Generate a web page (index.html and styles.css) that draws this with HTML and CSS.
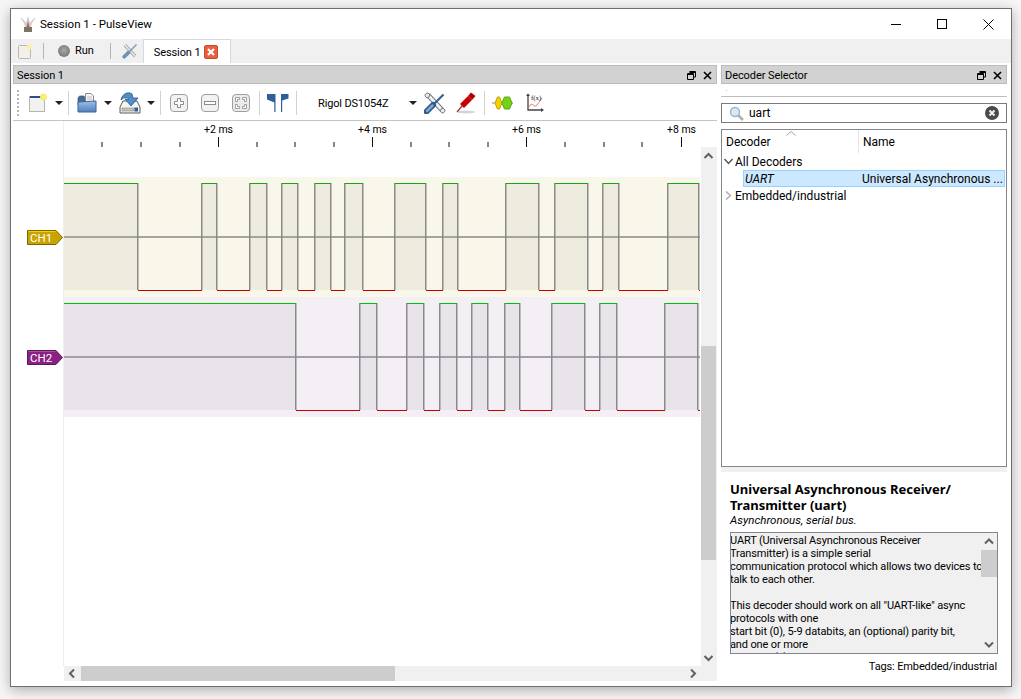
FILE: index.html
```html
<!DOCTYPE html>
<html lang="en">
<head>
  <meta charset="UTF-8" />
  <title>Session 1 - PulseView</title>
  <link rel="stylesheet" href="styles.css">
</head>
<body>
  <div class="window">

    <div class="titlebar">
      <svg class="app-icon" width="16" height="18" viewBox="0 0 16 18">
        <rect x="4" y="12" width="8" height="5" fill="#7d7466"/>
        <path d="M5 12 L3 4 L6 8 L8 1 L10 8 L13 4 L11 12Z" fill="#d5cbd8"/>
        <path d="M6.500 12 L8 6 L9.500 12Z" fill="#b0703c"/>
        <path d="M1 3 L4 7 M15 3 L12 7" stroke="#c4bcb2" fill="none"/>
      </svg>
      <span class="app-title">Session 1 - PulseView</span>
      <div class="win-buttons">
        <button class="win-btn"><svg width="10" height="10"><path d="M0 5.500H10" stroke="#000"/></svg></button>
        <button class="win-btn"><svg width="10" height="10"><rect x=".5" y=".5" width="9" height="9" fill="none" stroke="#000"/></svg></button>
        <button class="win-btn"><svg width="11" height="11"><path d="M.5 .5L10.500 10.500M10.500 .5L.5 10.500" stroke="#000"/></svg></button>
      </div>
    </div>

    <div class="mainbar">
      <svg class="m-new" width="14" height="15" viewBox="0 0 14 15">
        <rect x=".5" y="1.500" width="12" height="13" rx="1" fill="#f1f1ea" stroke="#b8b8b4"/>
        <circle cx="11" cy="3" r="2.500" fill="#fbf3a0"/>
      </svg>
      <span class="m-sep m-sep-a"></span>
      <span class="run-dot"></span>
      <span class="run-label">Run</span>
      <span class="m-sep m-sep-b"></span>
      <svg class="m-tools" width="16" height="16" viewBox="0 0 22 22">
        <path d="M4 3L18 18" stroke="#9c9c9c" stroke-width="4.500"/>
        <path d="M4 3L18 18" stroke="#e6e6e6" stroke-width="2.400"/>
        <path d="M3 19L9 13" stroke="#6f90b8" stroke-width="5" stroke-linecap="round"/>
        <path d="M9 13L20 2" stroke="#7f9cc0" stroke-width="2"/>
      </svg>
      <div class="tab">
        <span>Session 1</span>
        <svg class="tab-close" width="14" height="14" viewBox="0 0 14 14">
          <rect x=".5" y=".5" width="13" height="13" rx="1.500" fill="#e8603c" stroke="#c94a30"/>
          <path d="M4 4L10 10M10 4L4 10" stroke="#fff" stroke-width="2.200"/>
        </svg>
      </div>
    </div>

    <div class="main">

      <section class="dock dock-left">
        <div class="dock-title">
          <span>Session 1</span>
          <svg class="dock-float" width="9" height="9" viewBox="0 0 9 9"><path d="M2.500 .5H8.500V6H6.500M.5 2.500H6.500V8.500H.5ZM.5 3.500H6.500M2.500 1.500H8.500" fill="none" stroke="#000"/></svg>
          <svg class="dock-close" width="9" height="9" viewBox="0 0 9 9"><path d="M1 1L8 8M8 1L1 8" stroke="#000" stroke-width="1.600"/></svg>
        </div>

        <div class="toolbar">
          <span class="handle"></span>
          <svg class="t-new" width="18" height="20" viewBox="0 0 18 20">
            <rect x=".5" y="3.500" width="15" height="15" fill="#f2f2ee" stroke="#b4b4b4"/>
            <rect x="1" y="3" width="13" height="2" fill="#2b4f8c"/>
            <circle cx="14.500" cy="4" r="3" fill="#fdf45c" stroke="#f2e47a"/>
          </svg>
          <span class="caret c-new"></span>
          <span class="sep s-1"></span>
          <svg class="t-open" width="20" height="21" viewBox="0 0 20 21">
            <defs>
              <linearGradient id="folderFront" x1="0" y1="0" x2="0" y2="1">
                <stop offset="0" stop-color="#9cc0ea"/>
                <stop offset="1" stop-color="#4f80bc"/>
              </linearGradient>
            </defs>
            <path d="M1 5L2.500 3H7L8 5V12H1Z" fill="#4a6a96" stroke="#37547c" stroke-width=".7"/>
            <path d="M8.500 .5H14L16.500 3V10H8.500Z" fill="#f6f6f6" stroke="#8a8a8a"/>
            <path d="M10 4H15M10 6H15" stroke="#c0c0c0"/>
            <path d="M1 9L19 8V19H1Z" fill="url(#folderFront)" stroke="#3f6596"/>
          </svg>
          <span class="caret c-open"></span>
          <svg class="t-save" width="22" height="22" viewBox="0 0 22 22">
            <path d="M4 9H18L21 15V21H1V15Z" fill="#f4f4f0" stroke="#5a5a5a"/>
            <rect x="3" y="16" width="12" height="3" fill="#c4c4be" stroke="#777" stroke-width=".5"/>
            <rect x="15.500" y="15.500" width="3.500" height="4" fill="#345f96"/>
            <path d="M2 8C3 2 9 -1 13 2L14 6H19L12 14L6 7H10C9 5 5 5 2 8Z" fill="#4f8fc8" stroke="#28578a" stroke-width=".8"/>
          </svg>
          <span class="caret c-save"></span>
          <span class="sep s-2"></span>
          <svg class="t-zoomin" width="18" height="18" viewBox="0 0 18 18">
            <rect x=".5" y=".5" width="17" height="17" rx="3.500" fill="#f2f2f2" stroke="#9e9e9e"/>
            <path d="M7.500 4.500H10.500V7.500H13.500V10.500H10.500V13.500H7.500V10.500H4.500V7.500H7.500Z" fill="#fff" stroke="#8c8c8c"/>
          </svg>
          <svg class="t-zoomout" width="18" height="18" viewBox="0 0 18 18">
            <rect x=".5" y=".5" width="17" height="17" rx="3.500" fill="#f2f2f2" stroke="#9e9e9e"/>
            <rect x="3.500" y="7.500" width="11" height="3" fill="#fff" stroke="#8c8c8c"/>
          </svg>
          <svg class="t-fit" width="18" height="18" viewBox="0 0 18 18">
            <rect x=".5" y=".5" width="17" height="17" rx="3.500" fill="#ececec" stroke="#9e9e9e"/>
            <path d="M3.500 7.500V3.500H7.500V5.500H5.500V7.500ZM14.500 7.500V3.500H10.500V5.500H12.500V7.500ZM3.500 10.500V14.500H7.500V12.500H5.500V10.500ZM14.500 10.500V14.500H10.500V12.500H12.500V10.500Z" fill="#fff" stroke="#8c8c8c" stroke-width=".8"/>
          </svg>
          <span class="sep s-3"></span>
          <svg class="t-cursors" width="23" height="20" viewBox="0 0 23 20">
            <path d="M1 1H9.500V19H8.300V9.500L1 6.500Z" fill="#2f5f9e"/>
            <path d="M22.500 1H15V19H16.200V7.500L22.500 5.500Z" fill="#2f5f9e"/>
          </svg>
          <span class="sep s-4"></span>
          <span class="device">Rigol DS1054Z</span>
          <span class="caret"></span>
          <svg class="t-tools" width="22" height="22" viewBox="0 0 22 22">
            <path d="M4 3L18 18" stroke="#707a85" stroke-width="5"/>
            <path d="M4 3L18 18" stroke="#f2f2f2" stroke-width="3"/>
            <path d="M1 4L3 6L5 5L6 3L4 1C2 1 1 2 1 4Z" fill="#e8e8e8" stroke="#707a85"/>
            <path d="M21 18L19 16L17 17L16 19L18 21C20 21 21 20 21 18Z" fill="#e8e8e8" stroke="#707a85"/>
            <path d="M10 12L19.500 2.500" stroke="#35618f" stroke-width="2.200"/>
            <path d="M2.500 19.500L9 13" stroke="#2d5a8e" stroke-width="6" stroke-linecap="round"/>
            <path d="M3 19L8.500 13.500" stroke="#7fa7d4" stroke-width="2.500" stroke-linecap="round"/>
          </svg>
          <svg class="t-probe" width="20" height="22" viewBox="0 0 20 22">
            <ellipse cx="10" cy="20" rx="9" ry="1.500" fill="#d4d4d4"/>
            <path d="M1 20L7 13" stroke="#a83030" stroke-width="1.200"/>
            <path d="M4 12L12 4L16 8L8 16Z" fill="#cc0000"/>
            <path d="M12 4L15 0.500L19.500 4L16 8Z" fill="#b00000"/>
          </svg>
          <span class="sep s-5"></span>
          <svg class="t-decoder" width="21" height="14" viewBox="0 0 21 14">
            <path d="M0 7H3M19 7H21" stroke="#888a85"/>
            <path d="M3 7L5.500 1H7.500L10 7L7.500 13H5.500Z" fill="#edd400" stroke="#c4a000"/>
            <path d="M10 7L12.500 1H17.500L20 7L17.500 13H12.500Z" fill="#73d216" stroke="#5ba80e"/>
          </svg>
          <svg class="t-math" width="18" height="20" viewBox="0 0 18 20">
            <path d="M2 1V17H17" fill="none" stroke="#444" stroke-width="1.300"/>
            <path d="M0 3L2 0.500L4 3ZM15 15L18 17L15 19Z" fill="#444"/>
            <path d="M3 14C6 7 8 16 11 12S14 7 16 5" fill="none" stroke="#ee7878"/>
            <text class="math-f" x="5" y="7">f(x)</text>
          </svg>
        </div>

        <div class="trace">
          <svg class="plot" width="688" height="545" viewBox="13 121 688 545">
            <path d="M63.500 121V666" stroke="#efefef"/>

            <path d="M102 142V147M141 142V147M180 142V147M257 142V147M295 142V147M334 142V147M411 142V147M449 142V147M488 142V147M565 142V147M604 142V147M642 142V147" stroke="#111"/>
            <path d="M218.500 137V147M372.500 137V147M526.500 137V147M681.500 137V147" stroke="#111"/>
            <text class="tick" x="218.500" y="133">+2 ms</text>
            <text class="tick" x="372.500" y="133">+4 ms</text>
            <text class="tick" x="526.500" y="133">+6 ms</text>
            <text class="tick" x="681.500" y="133">+8 ms</text>

            <!-- CH1 -->
            <rect x="64" y="177" width="636" height="120" fill="#f9f7ea"/>
            <path fill="#edecdf" d="M64 183H138V290H64ZM202 183H217V290H202ZM250 183H267V290H250ZM282 183H298V290H282ZM315 183H331V290H315ZM345 183H363V290H345ZM395 183H426V290H395ZM443 183H458V290H443ZM506 183H539V290H506ZM555 183H588V290H555ZM603 183H619V290H603ZM668 183H699V290H668Z"/>
            <path class="mid" stroke="#a5a59b" d="M64 237H700"/>
            <path class="edge" d="M138 183V290M202 183V290M217 183V290M250 183V290M267 183V290M282 183V290M298 183V290M315 183V290M331 183V290M345 183V290M363 183V290M395 183V290M426 183V290M443 183V290M458 183V290M506 183V290M539 183V290M555 183V290M588 183V290M603 183V290M619 183V290M668 183V290M699 183V290"/>
            <path class="hi" d="M64 183.500H138M202 183.500H217M250 183.500H267M282 183.500H298M315 183.500H331M345 183.500H363M395 183.500H426M443 183.500H458M506 183.500H539M555 183.500H588M603 183.500H619M668 183.500H699"/>
            <path class="lo" d="M138 290.500H202M217 290.500H250M267 290.500H282M298 290.500H315M331 290.500H345M363 290.500H395M426 290.500H443M458 290.500H506M539 290.500H555M588 290.500H603M619 290.500H668M699 290.500H700"/>

            <!-- CH2 -->
            <rect x="64" y="297" width="636" height="120" fill="#f4eff5"/>
            <path fill="#e9e4ea" d="M64 303H296V410H64ZM360 303H377V410H360ZM407 303H424V410H407ZM440 303H457V410H440ZM472 303H488V410H472ZM505 303H520V410H505ZM552 303H585V410H552ZM600 303H617V410H600ZM665 303H698V410H665Z"/>
            <path class="mid" stroke="#a5a0a7" d="M64 357H700"/>
            <path class="edge" d="M296 303V410M360 303V410M377 303V410M407 303V410M424 303V410M440 303V410M457 303V410M472 303V410M488 303V410M505 303V410M520 303V410M552 303V410M585 303V410M600 303V410M617 303V410M665 303V410M698 303V410"/>
            <path class="hi hi-2" d="M64 303.500H296M360 303.500H377M407 303.500H424M440 303.500H457M472 303.500H488M505 303.500H520M552 303.500H585M600 303.500H617M665 303.500H698"/>
            <path class="lo" d="M296 410.500H360M377 410.500H407M424 410.500H440M457 410.500H472M488 410.500H505M520 410.500H552M585 410.500H600M617 410.500H665M698 410.500H700"/>

            <path d="M27.500 230.500H56L62.500 237.500L56 244.500H27.500Z" fill="#c9a400" stroke="#7d6700"/>
            <path d="M28.500 231.500H55.500" stroke="#edd400"/>
            <text class="chan" x="30" y="242">CH1</text>
            <path d="M27.500 350.500H56L62.500 357.500L56 364.500H27.500Z" fill="#8c2185" stroke="#571a55"/>
            <path d="M28.500 351.500H55.500" stroke="#b04aa9"/>
            <text class="chan" x="30" y="362">CH2</text>
          </svg>

          <div class="vscroll">
            <svg class="arrow" width="15" height="18" viewBox="0 0 15 18"><path d="M3.500 11L7.500 7L11.500 11" class="chev"/></svg>
            <div class="vthumb"></div>
            <svg class="arrow arrow-end" width="15" height="18" viewBox="0 0 15 18"><path d="M3.500 8L7.500 12L11.500 8" class="chev"/></svg>
          </div>

          <div class="hscroll">
            <svg class="arrow" width="17" height="15" viewBox="0 0 17 15"><path d="M10 3.500L6 7.500L10 11.500" class="chev"/></svg>
            <div class="hthumb"></div>
            <svg class="arrow hscroll-end" width="17" height="15" viewBox="0 0 17 15"><path d="M7 3.500L11 7.500L7 11.500" class="chev"/></svg>
          </div>
          <div class="corner"></div>
        </div>
      </section>

      <section class="dock dock-right">
        <div class="dock-title">
          <span>Decoder Selector</span>
          <svg class="dock-float" width="9" height="9" viewBox="0 0 9 9"><path d="M2.500 .5H8.500V6H6.500M.5 2.500H6.500V8.500H.5ZM.5 3.500H6.500M2.500 1.500H8.500" fill="none" stroke="#000"/></svg>
          <svg class="dock-close" width="9" height="9" viewBox="0 0 9 9"><path d="M1 1L8 8M8 1L1 8" stroke="#000" stroke-width="1.600"/></svg>
        </div>
        <div class="subbar"><span class="subdot"></span></div>

        <div class="search">
          <svg width="15" height="15" viewBox="0 0 15 15">
            <path d="M9 9L14 14" stroke="#b0b0b0" stroke-width="2.500"/>
            <circle cx="6" cy="6" r="4.500" fill="#d8e8f6" stroke="#9fb4c8" stroke-width="1.400"/>
          </svg>
          <span class="search-text">uart</span>
          <svg class="search-clear" width="14" height="14" viewBox="0 0 14 14">
            <circle cx="7" cy="7" r="7" fill="#4a4a4a"/>
            <path d="M4.500 4.500L9.500 9.500M9.500 4.500L4.500 9.500" stroke="#f0f0f0" stroke-width="2"/>
          </svg>
        </div>

        <div class="tree">
          <div class="tree-head">
            <div class="col-decoder">Decoder
              <svg class="sort" width="10" height="5" viewBox="0 0 10 5"><path d="M.5 4.500L5 .5L9.500 4.500" fill="none" stroke="#a0a0a0"/></svg>
            </div>
            <div class="col-name">Name</div>
          </div>
          <div class="tree-row">
            <svg class="tree-arrow" width="11" height="11" viewBox="0 0 11 11"><path d="M1.500 3L5.500 7.500L9.500 3" fill="none" stroke="#555" stroke-width="1.400"/></svg>
            <span>All Decoders</span>
          </div>
          <div class="tree-row selected">
            <span class="sel-decoder">UART</span>
            <span class="sel-name">Universal Asynchronous ...</span>
          </div>
          <div class="tree-row">
            <svg class="tree-arrow" width="11" height="11" viewBox="0 0 11 11"><path d="M3 1.500L7.500 5.500L3 9.500" fill="none" stroke="#a8a8a8" stroke-width="1.400"/></svg>
            <span>Embedded/industrial</span>
          </div>
        </div>

        <div class="strip"></div>

        <div class="details">
          <h3>Universal Asynchronous Receiver/<br>Transmitter (uart)</h3>
          <p class="summary">Asynchronous, serial bus.</p>
          <div class="desc">
            <div class="desc-text">UART (Universal Asynchronous Receiver<br>Transmitter) is a simple serial<br>communication protocol which allows two devices to<br>talk to each other.<br><br>This decoder should work on all "UART-like" async<br>protocols with one<br>start bit (0), 5-9 databits, an (optional) parity bit,<br>and one or more<br>stop bits (1), in this order.</div>
            <div class="desc-scroll">
              <svg class="arrow" width="16" height="17" viewBox="0 0 16 17"><path d="M4 10.500L8 6.500L12 10.500" class="chev"/></svg>
              <div class="desc-thumb"></div>
              <svg class="arrow arrow-end" width="16" height="17" viewBox="0 0 16 17"><path d="M4 6.500L8 10.500L12 6.500" class="chev"/></svg>
            </div>
          </div>
          <div class="tags">Tags: Embedded/industrial</div>
        </div>
      </section>

    </div>
  </div>
</body>
</html>
```

FILE: styles.css
```css
html, body {
  margin: 0;
  padding: 0;
  height: 100%;
  background: #f6f6f6;
  overflow: hidden;
}
body {
  font-family: 'Roboto', 'Noto Sans', sans-serif;
  font-size: 11px;
  letter-spacing: -0.08px;
  color: #000;
}
svg {
  display: block;
  flex: none;
}
.window {
  box-sizing: border-box;
  width: 1002px;
  height: 679px;
  margin: 8px 0 0 10px;
  border: 1px solid #6f6f6f;
  background: white;
  box-shadow: 0 3px 12px rgba(0,0,0,0.3);
  display: flex;
  flex-direction: column;
}

/* title bar */
.titlebar {
  height: 30px;
  display: flex;
  align-items: center;
  flex: none;
}
.app-icon {
  margin-left: 9px;
}
.app-title {
  margin-left: 4px;
  font-size: 11.5px;
  letter-spacing: 0;
}
.win-buttons {
  margin-left: auto;
  display: flex;
}
.win-btn {
  width: 46px;
  height: 30px;
  border: 0;
  padding: 0;
  background: none;
  display: flex;
  align-items: center;
  justify-content: center;
}

/* main toolbar with the tab */
.mainbar {
  height: 24px;
  flex: none;
  background: #f0f0f0;
  display: flex;
  align-items: center;
}
.m-new {
  margin-left: 7px;
}
.m-sep {
  width: 1px;
  height: 16px;
  background: #b4b4b4;
}
.m-sep-a {
  margin-left: 11px;
}
.run-dot {
  width: 12px;
  height: 12px;
  margin-left: 14px;
  border-radius: 50%;
  background: radial-gradient(circle at 50% 45%, #a8a8a8, #7c7c7c 70%, #a0a0a0);
}
.run-label {
  margin: 0 0 1px 5px;
}
.m-sep-b {
  margin-left: 16px;
}
.m-tools {
  margin-left: 11px;
}
.tab {
  box-sizing: border-box;
  width: 88px;
  height: 24px;
  margin-left: 5px;
  padding: 1px 0 0 10px;
  background: white;
  border: 1px solid #d9d9d9;
  border-bottom: 0;
  display: flex;
  align-items: center;
}
.tab-close {
  margin-left: 3px;
}

/* docks */
.main {
  flex: 1;
  display: flex;
  gap: 4px;
  padding: 2px 4px 5px 2px;
  min-height: 0;
}
.dock {
  display: flex;
  flex-direction: column;
}
.dock-left {
  width: 704px;
}
.dock-right {
  width: 286px;
}
.dock-title {
  box-sizing: border-box;
  height: 19px;
  flex: none;
  padding: 1px 4px 0 3px;
  background: #d2d2d2;
  border: 1px solid #bcbcbc;
  display: flex;
  align-items: center;
}
.dock-float {
  margin-left: auto;
  margin-right: 7px;
}

/* session toolbar */
.toolbar {
  box-sizing: border-box;
  height: 37px;
  flex: none;
  padding-top: 2px;
  border-bottom: 1px solid #c4c4c4;
  display: flex;
  align-items: center;
}
.handle {
  width: 2px;
  height: 26px;
  margin-left: 4px;
  background: repeating-linear-gradient(to bottom, #b8b8b8 0, #b8b8b8 2px, transparent 2px, transparent 4px);
}
.caret {
  width: 0;
  height: 0;
  border-left: 4px solid transparent;
  border-right: 4px solid transparent;
  border-top: 4px solid #222;
}
.sep {
  width: 1px;
  height: 24px;
  background: #d0d0d0;
}
.t-new { margin-left: 10px; }
.c-new { margin-left: 8px; }
.s-1 { margin-left: 5px; }
.t-open { margin-left: 8px; }
.c-open { margin-left: 7px; }
.t-save { margin-left: 7px; }
.c-save { margin-left: 6px; }
.s-2 { margin-left: 5px; }
.t-zoomin { margin-left: 9px; }
.t-zoomout { margin-left: 13px; }
.t-fit { margin-left: 13px; }
.s-3 { margin-left: 9px; }
.t-cursors { margin-left: 6px; }
.s-4 { margin-left: 7px; }
.device {
  width: 91px;
  margin-left: 21px;
  letter-spacing: -0.15px;
}
.t-tools { margin-left: 7px; }
.t-probe { margin-left: 10px; }
.s-5 { margin-left: 8px; }
.t-decoder { margin-left: 7px; }
.t-math { margin-left: 13px; }
.math-f {
  font: 7px 'Liberation Serif', serif;
  fill: #222;
}

/* trace view */
.trace {
  display: grid;
  grid-template-columns: 688px 16px;
  grid-template-rows: 545px 15px;
}
.tick {
  font-size: 10.5px;
  letter-spacing: 0;
  text-anchor: middle;
}
.mid {
  stroke-width: 2;
  fill: none;
}
.edge {
  stroke: #8a8a8a;
  stroke-width: 1.5;
  fill: none;
  transform: translateX(-0.25px);
}
.hi {
  stroke: #14a814;
  stroke-width: 1;
  fill: none;
}
.hi-2 {
  stroke: #00c000;
}
.lo {
  stroke: #c80000;
  stroke-width: 1;
  fill: none;
}
.chan {
  font-size: 11.5px;
  letter-spacing: 0;
  fill: #fff;
}
.chev {
  fill: none;
  stroke: #606060;
  stroke-width: 2;
}
.vscroll {
  margin-top: 26px;
  background: #f0f0f0;
  display: flex;
  flex-direction: column;
}
.vthumb {
  width: 15px;
  height: 214px;
  margin-top: 181px;
  background: #cdcdcd;
}
.arrow-end {
  margin-top: auto;
}
.hscroll {
  margin-left: 51px;
  background: #f0f0f0;
  display: flex;
}
.hthumb {
  width: 314px;
  background: #cdcdcd;
}
.hscroll-end {
  margin-left: auto;
}
.corner {
  background: #f0f0f0;
}

/* decoder selector */
.subbar {
  height: 12px;
  flex: none;
  border-bottom: 1px solid #bdbdbd;
  position: relative;
}
.subdot {
  position: absolute;
  left: 5px;
  top: 6px;
  width: 1px;
  height: 1px;
  background: #c0c0c0;
}
.search {
  box-sizing: border-box;
  height: 20px;
  flex: none;
  margin-top: 6px;
  padding: 0 7px;
  border: 1px solid #7a7a7a;
  display: flex;
  align-items: center;
  font-size: 12px;
  letter-spacing: 0;
}
.search-text {
  margin-left: 5px;
}
.search-clear {
  margin-left: auto;
}
.tree {
  flex: 1;
  margin-top: 6px;
  border: 1px solid #828790;
  min-height: 0;
  font-size: 12px;
  letter-spacing: 0;
}
.tree-head {
  height: 23px;
  display: flex;
}
.col-decoder {
  box-sizing: border-box;
  width: 137px;
  padding: 5px 0 0 4px;
  border-right: 1px solid #e5e5e5;
  position: relative;
}
.sort {
  position: absolute;
  left: 64px;
  top: 1px;
}
.col-name {
  padding: 5px 0 0 4px;
}
.tree-row {
  height: 17px;
  display: flex;
  align-items: center;
}
.tree-arrow {
  margin: 0 1px 0 1px;
}
.selected {
  box-sizing: border-box;
  margin: 0 1px 0 21px;
  background: #cce8ff;
  border: 1px solid #99d1ff;
}
.sel-decoder {
  width: 117px;
  padding-left: 1px;
  font-style: italic;
}
.strip {
  height: 5px;
  flex: none;
  background: #f0f0f0;
}
.details {
  flex: none;
  height: 209px;
  padding: 9px 9px 0;
  box-sizing: border-box;
}
.details h3 {
  margin: 0;
  font-family: 'Noto Sans', sans-serif;
  font-size: 13px;
  letter-spacing: 0;
  line-height: 16px;
}
.summary {
  margin: 0;
  font-size: 11.5px;
  letter-spacing: 0;
  line-height: 14px;
  font-style: italic;
}
.desc {
  box-sizing: border-box;
  width: 268px;
  height: 122px;
  margin-top: 5px;
  background: #f0f0f0;
  border: 1px solid #84848f;
  display: flex;
  overflow: hidden;
}
.desc-text {
  box-sizing: border-box;
  width: 251px;
  margin-left: -1px;
  padding-top: 1px;
  flex: none;
  line-height: 13px;
  letter-spacing: -0.13px;
  white-space: nowrap;
}
.desc-scroll {
  width: 16px;
  display: flex;
  flex-direction: column;
}
.desc-thumb {
  height: 27px;
  background: #cdcdcd;
}
.tags {
  margin: 6px 1px 0 0;
  text-align: right;
  letter-spacing: -0.13px;
}
```
